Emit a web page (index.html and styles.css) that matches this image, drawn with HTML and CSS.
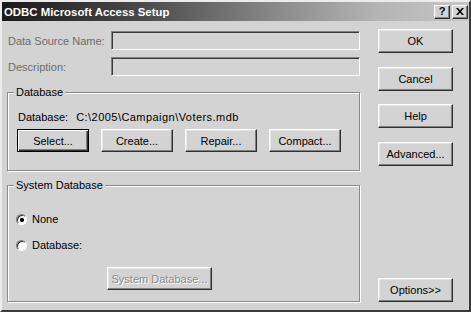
FILE: index.html
```html
<!DOCTYPE html>
<html lang="en">
<head>
    <meta charset="UTF-8">
    <title>ODBC Microsoft Access Setup</title>
    <link rel="stylesheet" href="styles.css">
</head>
<body>
    <div class="window">
        <!-- Title bar -->
        <div class="titlebar">
            <span class="title">ODBC Microsoft Access Setup</span>
            <div class="caption-btns">
                <span class="cap-btn help">?</span>
                <span class="cap-btn">
                    <svg width="8" height="7" viewBox="0 0 8 7">
                        <path d="M0 0h2l2 2.2L6 0h2L5 3.5 8 7H6L4 4.8 2 7H0l3-3.5z" fill="#000"/>
                    </svg>
                </span>
            </div>
        </div>

        <div class="content">
            <div class="main">
                <div class="field-row first">
                    <span class="field-label">Data Source Name:</span>
                    <div class="input"></div>
                </div>
                <div class="field-row">
                    <span class="field-label">Description:</span>
                    <div class="input"></div>
                </div>

                <!-- Database group -->
                <div class="group db-group">
                    <span class="group-title">Database</span>
                    <div class="db-path">
                        <span>Database:</span>
                        <span class="path-value">C:\2005\Campaign\Voters.mdb</span>
                    </div>
                    <div class="btn-row">
                        <button class="btn default">Select...</button>
                        <button class="btn">Create...</button>
                        <button class="btn">Repair...</button>
                        <button class="btn">Compact...</button>
                    </div>
                </div>

                <!-- System database group -->
                <div class="group sys-group">
                    <span class="group-title">System Database</span>
                    <div class="radio-row first">
                        <span class="radio checked"></span>
                        <span>None</span>
                    </div>
                    <div class="radio-row">
                        <span class="radio"></span>
                        <span>Database:</span>
                    </div>
                    <button class="btn disabled sys-btn">System Database...</button>
                </div>
            </div>

            <div class="side">
                <button class="btn">OK</button>
                <button class="btn">Cancel</button>
                <button class="btn">Help</button>
                <button class="btn">Advanced...</button>
                <button class="btn options">Options&gt;&gt;</button>
            </div>
        </div>
    </div>
</body>
</html>
```

FILE: styles.css
```css
* {
    box-sizing: border-box;
}

body {
    margin: 0;
    padding: 0;
    font-family: "Liberation Sans", Arial, sans-serif;
    font-size: 11px;
    color: #000;
    background: #fff;
}

.window {
    width: 471px;
    height: 312px;
    background: #d3d3d3;
    border-style: solid;
    border-width: 2px;
    border-color: #ececec #3a3a3a #3a3a3a #ececec;
    display: flex;
    flex-direction: column;
}

/* Title bar */
.titlebar {
    height: 19px;
    padding: 0 1px 0 2px;
    background: linear-gradient(to right, #1a1a1a, #4a4a4a 30%, #8c8c8c 60%, #b4b4b4 80%, #c6c6c6);
    display: flex;
    align-items: center;
    justify-content: space-between;
}

.title {
    color: #fff;
    font-weight: bold;
    font-size: 11.4px;
}

.caption-btns {
    display: flex;
    gap: 2px;
}

.cap-btn {
    width: 16px;
    height: 14px;
    background: #d3d3d3;
    border: 1px solid;
    border-color: #fff #303030 #303030 #fff;
    box-shadow: inset -1px -1px #808080;
    display: flex;
    align-items: center;
    justify-content: center;
    font-weight: bold;
    font-size: 11px;
    line-height: 1;
}

/* Main area */
.content {
    flex: 1;
    display: flex;
    padding: 10px 0 8px 5px;
}

.main {
    width: 353px;
    display: flex;
    flex-direction: column;
}

.field-row {
    display: flex;
    align-items: center;
    margin-top: 7px;
}

.field-row.first {
    margin-top: 0;
}

.field-label {
    width: 103px;
    margin-left: 1px;
    color: #6c6c6c;
}

.input {
    width: 249px;
    height: 19px;
    border: 1px solid;
    border-color: #808080 #fff #fff #808080;
    box-shadow: inset 1px 1px #3a3a3a;
}

/* Group boxes (etched frame) */
.group {
    border: 1px solid #8a8a8a;
    box-shadow: inset 1px 1px #fff, 1px 1px #fff;
    display: flex;
    flex-direction: column;
    align-items: flex-start;
}

.group-title {
    margin: -7px 0 0 6px;
    padding: 0 2px;
    line-height: 13px;
    background: #d3d3d3;
}

.db-group {
    margin-top: 16px;
    height: 79px;
}

.db-path {
    margin: 11px 0 0 10px;
    line-height: 14px;
}

.path-value {
    margin-left: 5px;
    letter-spacing: 0.45px;
}

.btn-row {
    display: flex;
    gap: 12px;
    margin: 5px 0 0 9px;
}

.btn-row .btn {
    width: 72px;
}

.sys-group {
    margin-top: 14px;
    height: 117px;
}

.radio-row {
    display: flex;
    align-items: center;
    gap: 5px;
    margin: 12px 0 0 8px;
    line-height: 14px;
}

.radio-row.first {
    margin-top: 20px;
}

.radio {
    width: 11px;
    height: 11px;
    border-radius: 50%;
    border: 1px solid;
    border-color: #7a7a7a #fff #fff #7a7a7a;
    background: #fff;
    box-shadow: inset 1px 1px #303030;
}

.radio.checked {
    background: radial-gradient(circle at 55% 55%, #000 1.8px, #fff 2.4px);
}

.sys-btn {
    margin: 15px 0 0 99px;
    width: 105px;
}

/* Buttons */
.btn {
    height: 23px;
    padding: 0;
    font-family: inherit;
    font-size: 11px;
    color: #000;
    background: #d3d3d3;
    border: 1px solid;
    border-color: #fff #303030 #303030 #fff;
    box-shadow: inset -1px -1px #808080, inset 1px 1px #e6e6e6;
}

.btn.default {
    border-color: #000;
    box-shadow: inset 1px 1px #fff, inset -1px -1px #303030, inset -2px -2px #808080;
}

.btn.disabled {
    color: #8a8a8a;
    text-shadow: 1px 1px #fff;
}

.side {
    width: 75px;
    margin-left: 18px;
    display: flex;
    flex-direction: column;
    gap: 13.7px;
}

.side .btn {
    height: 24px;
}

.side .btn:first-child {
    margin-top: -2px;
}

.side .options {
    margin-top: auto;
}
```
